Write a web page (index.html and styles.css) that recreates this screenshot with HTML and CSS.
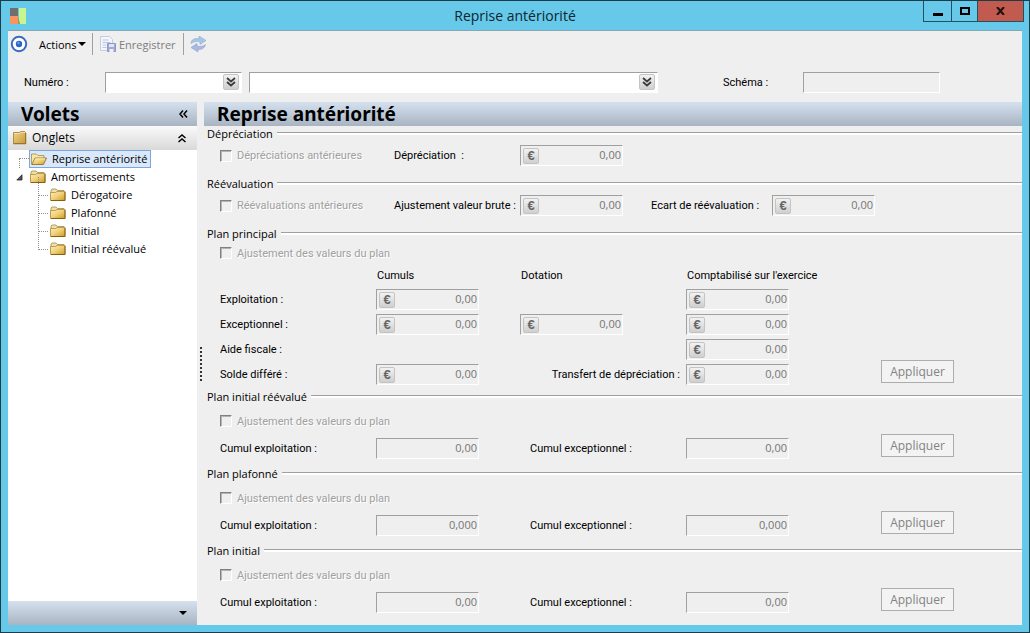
FILE: index.html
```html
<!DOCTYPE html>
<html lang="fr">
<head>
  <meta charset="UTF-8" />
  <title>Reprise antériorité</title>
  <link rel="stylesheet" href="styles.css">
</head>
<body>
  <!-- Shared icons -->
  <svg class="defs" width="0" height="0" aria-hidden="true">
    <linearGradient id="gold" x1="0" y1="0" x2="1" y2="1">
      <stop offset="0" stop-color="#fdf0b8" />
      <stop offset="0.5" stop-color="#f0cf78" />
      <stop offset="1" stop-color="#d09a1c" />
    </linearGradient>
    <linearGradient id="tan" x1="0" y1="0" x2="1" y2="1">
      <stop offset="0" stop-color="#efd289" />
      <stop offset="1" stop-color="#c99a3c" />
    </linearGradient>
    <symbol id="folder" viewBox="0 0 16 16">
      <path d="M1 13V3l1-1h4l1.500 1.500H14V6z" fill="#efe0a8" stroke="#a08a50" stroke-width=".8" />
      <path d="M.5 13.500V5.500h5L7 4.500h8v9z" fill="url(#gold)" stroke="#b08c38" stroke-width=".8" />
      <path d="M1 13.500h14V5" fill="none" stroke="#80611a" />
    </symbol>
    <symbol id="folder-open" viewBox="0 0 16 16">
      <path d="M.5 13V3h5l1.500 1.500h6V7" fill="#f6e6a8" stroke="#a98c40" stroke-width=".8" />
      <path d="M.8 13.500L4 7h11.500l-3 6.500z" fill="url(#gold)" stroke="#8c6a1c" stroke-width=".8" />
      <path d="M4.500 7.800h9.500" stroke="#fff6cf" stroke-width=".8" />
    </symbol>
    <symbol id="folder-group" viewBox="0 0 16 16">
      <path d="M1.500 13.500v-11h6l1-1h4l1 1v11z" fill="url(#tan)" stroke="#a07a30" stroke-width=".8" />
      <path d="M2 3.500h6l1-1h4" fill="none" stroke="#f8e4ac" stroke-width=".8" />
      <path d="M1.500 13.800h12.300V3" fill="none" stroke="#8a6420" stroke-width=".8" />
    </symbol>
    <symbol id="chevrons" viewBox="0 0 10 10">
      <path d="M1 1l4 3.500L9 1M1 5l4 3.500L9 5" fill="none" stroke="#3c3c3c" stroke-width="1.800" />
    </symbol>
  </svg>

  <div class="window">
    <header class="titlebar">
      <svg class="app-icon" width="16" height="16" viewBox="0 0 16 16">
        <path d="M0 0h8v8H0z" fill="#706f6f" />
        <path d="M0 8h8v8H0z" fill="#f9945f" />
        <path d="M9 0h7v16h-6l-1-3z" fill="#c9f58f" />
        <path d="M8 8l2 8H8z" fill="#8f9a70" />
      </svg>
      <h1>Reprise antériorité</h1>
      <div class="controls">
        <button class="minimize" aria-label="Réduire"><svg width="10" height="9" viewBox="0 0 10 9"><path d="M0 6h10v3H0z" /></svg></button>
        <button class="maximize" aria-label="Agrandir"><svg width="10" height="8" viewBox="0 0 10 8"><path d="M1 1h8v6H1z" fill="none" stroke="#000" stroke-width="2" /></svg></button>
        <button class="close" aria-label="Fermer"><svg width="9" height="8" viewBox="0 0 9 8"><path d="M1 0l7 8M8 0L1 8" stroke="#2a1010" stroke-width="2.200" /></svg></button>
      </div>
    </header>

    <div class="client">
      <div class="toolbar">
        <svg class="target" width="18" height="18" viewBox="0 0 18 18">
          <circle cx="9" cy="9" r="7.200" fill="#fff" stroke="#3a6bbd" stroke-width="2" />
          <circle cx="9" cy="9" r="3.200" fill="#2c66c4" />
          <circle cx="8.500" cy="8" r="1.200" fill="#6d9be4" />
        </svg>
        <button class="tool actions">Actions<span class="caret"></span></button>
        <button class="tool save" disabled>
          <svg width="16" height="16" viewBox="0 0 16 16">
            <path d="M.5.5h9l3 3v11H.5z" fill="#f3f6fb" stroke="#c3cce0" />
            <path d="M2.500 4h6M2.500 6.500h8M2.500 9h4M2.500 11.500h4" stroke="#b4c6e4" />
            <path d="M7.500 7.500h8v8h-8z" fill="#a3a9d2" stroke="#8f96c4" />
            <path d="M9 8h5v3H9z" fill="#dfe4f3" />
            <path d="M9.500 13h4v3h-4z" fill="#eceff8" />
          </svg>
          Enregistrer
        </button>
        <button class="tool refresh" disabled aria-label="Actualiser">
          <svg width="17" height="16" viewBox="0 0 17 16">
            <path d="M1 7.500C1 3.500 5 1.800 9 2.800V0l7 4.500-6 4V6C7 5 4 5.500 1 7.500z" fill="#a5c6e6" stroke="#8fabcd" stroke-width=".6" />
            <path d="M15.500 8.500c-1 4-4 5.500-7.500 4.700V16l-7-4.500 6-4V10c3 1 6 .5 8.500-1.500z" fill="#a9b9df" stroke="#8e9fc8" stroke-width=".6" />
          </svg>
        </button>
      </div>

      <div class="search">
        <label for="numero">Numéro :</label>
        <div class="lookup lookup-code">
          <input type="text" id="numero">
          <button aria-label="Choisir un numéro"><svg width="10" height="10"><use href="#chevrons" /></svg></button>
        </div>
        <div class="lookup lookup-name">
          <input type="text" aria-label="Libellé">
          <button aria-label="Choisir un libellé"><svg width="10" height="10"><use href="#chevrons" /></svg></button>
        </div>
        <label class="schema-label" for="schema">Schéma :</label>
        <input type="text" id="schema" class="schema" disabled>
      </div>

      <div class="panes">
        <nav class="sidebar">
          <div class="bar">
            <h2>Volets</h2>
            <button aria-label="Replier"><svg width="9" height="8" viewBox="0 0 9 8"><path d="M4 .5L1 4l3 3.500M8 .5L5 4l3 3.500" /></svg></button>
          </div>
          <div class="group">
            <svg width="16" height="16"><use href="#folder-group" /></svg>
            <span>Onglets</span>
            <button aria-label="Fermer le groupe"><svg width="8" height="9" viewBox="0 0 8 9"><path d="M.5 4L4 1l3.500 3M.5 8L4 5l3.500 3" /></svg></button>
          </div>
          <ul class="tree">
            <li class="first">
              <a href="#" class="selected"><svg width="16" height="16"><use href="#folder-open" /></svg>Reprise antériorité</a>
            </li>
            <li class="parent">
              <svg class="expander" width="7" height="7" viewBox="0 0 7 7"><path d="M6 .8V6H.8z" fill="#555" stroke="#222" stroke-width=".8" /></svg>
              <a href="#"><svg width="16" height="16"><use href="#folder" /></svg>Amortissements</a>
            </li>
            <li class="child"><a href="#"><svg width="16" height="16"><use href="#folder" /></svg>Dérogatoire</a></li>
            <li class="child"><a href="#"><svg width="16" height="16"><use href="#folder" /></svg>Plafonné</a></li>
            <li class="child"><a href="#"><svg width="16" height="16"><use href="#folder" /></svg>Initial</a></li>
            <li class="child"><a href="#"><svg width="16" height="16"><use href="#folder" /></svg>Initial réévalué</a></li>
          </ul>
          <div class="bar footer"><button aria-label="Configurer"><span class="caret"></span></button></div>
        </nav>

        <div class="splitter"><span></span></div>

        <main>
          <div class="bar"><h2>Reprise antériorité</h2></div>

          <fieldset class="simple">
            <legend>Dépréciation</legend>
            <div class="line">
              <label class="check"><input type="checkbox" disabled>Dépréciations antérieures</label>
              <label for="depreciation">Dépréciation&nbsp; :</label>
              <div class="amount"><button disabled>€</button><input type="text" id="depreciation" value="0,00" disabled></div>
            </div>
          </fieldset>

          <fieldset class="simple">
            <legend>Réévaluation</legend>
            <div class="line">
              <label class="check"><input type="checkbox" disabled>Réévaluations antérieures</label>
              <label for="valeur-brute">Ajustement valeur brute :</label>
              <div class="amount"><button disabled>€</button><input type="text" id="valeur-brute" value="0,00" disabled></div>
              <label for="ecart">Ecart de réévaluation :</label>
              <div class="amount"><button disabled>€</button><input type="text" id="ecart" value="0,00" disabled></div>
            </div>
          </fieldset>

          <fieldset class="principal">
            <legend>Plan principal</legend>
            <label class="check"><input type="checkbox" disabled>Ajustement des valeurs du plan</label>
            <div class="plan heads">
              <span class="c2">Cumuls</span>
              <span class="c3">Dotation</span>
              <span class="c4">Comptabilisé sur l'exercice</span>
            </div>
            <div class="plan">
              <label class="c1" for="exploitation">Exploitation :</label>
              <div class="amount c2"><button disabled>€</button><input type="text" id="exploitation" value="0,00" disabled></div>
              <div class="amount c4"><button disabled>€</button><input type="text" aria-label="Exploitation, exercice" value="0,00" disabled></div>

              <label class="c1" for="exceptionnel">Exceptionnel :</label>
              <div class="amount c2"><button disabled>€</button><input type="text" id="exceptionnel" value="0,00" disabled></div>
              <div class="amount c3"><button disabled>€</button><input type="text" aria-label="Exceptionnel, dotation" value="0,00" disabled></div>
              <div class="amount c4"><button disabled>€</button><input type="text" aria-label="Exceptionnel, exercice" value="0,00" disabled></div>

              <label class="c1" for="aide">Aide fiscale :</label>
              <div class="amount c4"><button disabled>€</button><input type="text" id="aide" value="0,00" disabled></div>

              <label class="c1" for="solde">Solde différé :</label>
              <div class="amount c2"><button disabled>€</button><input type="text" id="solde" value="0,00" disabled></div>
              <label class="c3 transfer" for="transfert">Transfert de dépréciation :</label>
              <div class="amount c4"><button disabled>€</button><input type="text" id="transfert" value="0,00" disabled></div>
              <button class="apply" disabled>Appliquer</button>
            </div>
          </fieldset>

          <fieldset>
            <legend>Plan initial réévalué</legend>
            <label class="check"><input type="checkbox" disabled>Ajustement des valeurs du plan</label>
            <div class="plan">
              <label class="c1" for="reevalue-expl">Cumul exploitation :</label>
              <div class="amount c2"><input type="text" id="reevalue-expl" value="0,00" disabled></div>
              <label class="c3 second" for="reevalue-exc">Cumul exceptionnel :</label>
              <div class="amount c4"><input type="text" id="reevalue-exc" value="0,00" disabled></div>
              <button class="apply" disabled>Appliquer</button>
            </div>
          </fieldset>

          <fieldset>
            <legend>Plan plafonné</legend>
            <label class="check"><input type="checkbox" disabled>Ajustement des valeurs du plan</label>
            <div class="plan">
              <label class="c1" for="plafonne-expl">Cumul exploitation :</label>
              <div class="amount c2"><input type="text" id="plafonne-expl" value="0,000" disabled></div>
              <label class="c3 second" for="plafonne-exc">Cumul exceptionnel :</label>
              <div class="amount c4"><input type="text" id="plafonne-exc" value="0,000" disabled></div>
              <button class="apply" disabled>Appliquer</button>
            </div>
          </fieldset>

          <fieldset>
            <legend>Plan initial</legend>
            <label class="check"><input type="checkbox" disabled>Ajustement des valeurs du plan</label>
            <div class="plan">
              <label class="c1" for="initial-expl">Cumul exploitation :</label>
              <div class="amount c2"><input type="text" id="initial-expl" value="0,00" disabled></div>
              <label class="c3 second" for="initial-exc">Cumul exceptionnel :</label>
              <div class="amount c4"><input type="text" id="initial-exc" value="0,00" disabled></div>
              <button class="apply" disabled>Appliquer</button>
            </div>
          </fieldset>
        </main>
      </div>
    </div>
  </div>
</body>
</html>
```
FILE: styles.css
```css
* {
  box-sizing: border-box;
}

body {
  margin: 0;
  font-family: Roboto, "Liberation Sans", Arial, sans-serif;
  font-size: 11px;
  line-height: 15px;
  color: #000;
}

button, input {
  font: inherit;
  color: inherit;
  margin: 0;
  padding: 0;
  border: none;
  border-radius: 0;
  background: none;
}

svg {
  display: block;
  flex: none;
}

.defs {
  position: absolute;
}

/* Window frame */
.window {
  display: flex;
  flex-direction: column;
  min-height: 100vh;
  padding: 0 7px 7px;
  border: 1px solid #1d3c4a;
  background: #66c9e9;
}

.titlebar {
  display: grid;
  grid-template-columns: 1fr auto 1fr;
  align-items: center;
  height: 29px;
}

.app-icon {
  margin-left: 2px;
}

.titlebar h1 {
  margin: 0;
  font: 14px/20px "Open Sans", sans-serif;
  color: #0c2530;
}

.controls {
  display: flex;
  justify-self: end;
  align-self: start;
  margin-right: -2px;
}

.controls button {
  display: flex;
  align-items: center;
  justify-content: center;
  width: 26px;
  height: 21px;
  border: 1px solid #25505f;
  border-width: 0 0 1px 1px;
}

.controls .minimize {
  width: 28px;
}

.controls .close {
  width: 47px;
  border-right-width: 1px;
  background: #c15b50;
}

.client {
  flex: 1;
  display: flex;
  flex-direction: column;
  border-top: 1px solid #86a6b3;
  background: #efefef;
}

/* Toolbar */
.toolbar {
  display: flex;
  align-items: center;
  height: 26px;
  padding-left: 2px;
  font-family: "Open Sans", sans-serif;
}

.tool {
  display: flex;
  align-items: center;
  height: 22px;
}

.tool:disabled {
  color: #7d7d7d;
}

.actions {
  width: 64px;
  padding-left: 11px;
}

.caret {
  display: block;
  border: 4px solid transparent;
  border-top-color: #000;
  border-bottom: none;
}

.actions .caret {
  margin-left: 1px;
}

.save {
  width: 91px;
  gap: 3px;
  padding-left: 7px;
  border-left: 1px solid #a0a0a0;
}

.refresh {
  padding-left: 6px;
  border-left: 1px solid #a0a0a0;
}

/* Search row */
.search {
  display: flex;
  align-items: center;
  height: 45px;
  padding: 5px 16px 0;
}

.search > label {
  width: 81px;
}

.search > .schema-label {
  width: 80px;
  margin-left: 65px;
}

.lookup, .schema, .amount {
  display: flex;
  align-items: center;
  height: 21px;
  border: 1px solid;
  border-color: #a0a0a0 #fff #fff #a0a0a0;
}

.lookup {
  padding-right: 2px;
  background: #fff;
}

.lookup-code {
  width: 137px;
  margin-right: 7px;
}

.lookup-name {
  width: 409px;
}

.schema {
  width: 137px;
}

.lookup input, .amount input {
  flex: 1;
  width: 0;
  min-width: 0;
}

.lookup button, .amount button {
  display: flex;
  align-items: center;
  justify-content: center;
  width: 16px;
  height: 16px;
  border: 1px solid #c4c4c4;
  border-radius: 2px;
  background: linear-gradient(#f2f2f2, #cfcfcf);
}

/* Panes */
.panes {
  flex: 1;
  display: flex;
}

.sidebar {
  display: flex;
  flex-direction: column;
  width: 189px;
  background: #fff;
  font: 11px/16px "Open Sans", sans-serif;
}

.bar {
  display: flex;
  align-items: center;
  justify-content: space-between;
  height: 24px;
  padding: 0 9px 0 13px;
  background: linear-gradient(#d5e1ee, #a8b4c2);
}

.bar h2 {
  margin: 0;
  font: bold 19px/24px "Noto Sans", sans-serif;
}

.bar path, .group button path {
  fill: none;
  stroke: #000;
  stroke-width: 1.500;
}

.group {
  display: flex;
  align-items: center;
  gap: 4px;
  height: 24px;
  padding: 0 11px 0 4px;
  background: linear-gradient(#fafafa, #d9d9d9);
  font-size: 12px;
}

.group button {
  margin-left: auto;
}

.tree {
  flex: 1;
  margin: 0;
  padding: 0;
  list-style: none;
}

.tree li {
  display: flex;
  align-items: center;
  height: 18px;
}

.tree a {
  display: flex;
  align-items: center;
  gap: 5px;
  height: 18px;
  padding: 0 3px 0 1px;
  border: 1px solid transparent;
  color: #000;
  text-decoration: none;
}

.tree .selected {
  border-color: #7da7dc;
  background: #d9e8fb;
}

/* Dotted branches */
.tree .first::before {
  content: "";
  width: 9px;
  height: 9px;
  margin-left: 11px;
  align-self: end;
  border: 1px dotted #909090;
  border-width: 1px 0 0 1px;
}

.tree .parent {
  padding-left: 8px;
  gap: 5px;
}

.tree .child::before {
  content: "";
  width: 9px;
  height: 18px;
  margin: -9px 0 0 30px;
  align-self: start;
  border: 1px dotted #909090;
  border-width: 0 0 1px 1px;
}

.footer {
  justify-content: flex-end;
  padding-right: 10px;
}

.splitter {
  display: flex;
  align-items: center;
  width: 7px;
  padding-left: 3px;
}

.splitter span {
  height: 34px;
  border-left: 2px dotted #333;
}

main {
  flex: 1;
}

/* Form sections */
fieldset {
  min-width: 0;
  margin: 0;
  padding: 8px 0 7px 16px;
  border: none;
}

legend {
  display: flex;
  align-items: center;
  gap: 4px;
  width: calc(100% + 16px);
  height: 15px;
  margin-left: -16px;
  padding: 0 0 0 3px;
  font-family: "Open Sans", sans-serif;
}

legend::after {
  content: "";
  flex: 1;
  height: 2px;
  border-top: 1px solid #a0a0a0;
  background: #fff;
}

.check {
  display: flex;
  align-items: center;
  gap: 5px;
  height: 18px;
  color: #a0a0a0;
  text-shadow: 1px 1px #fff;
}

.check input {
  appearance: none;
  width: 12px;
  height: 12px;
  border: 1px solid;
  border-color: #808080 #fff #fff #808080;
  box-shadow: inset 1px 1px #b4b4b4;
}

.simple {
  padding: 4px 0 10px 16px;
}

.line {
  display: grid;
  grid-template-columns: 174px 126px 131px 121px 1fr;
  align-items: center;
  height: 21px;
}

.plan {
  display: grid;
  grid-template-columns: 156px 144px 166px 195px 1fr;
  grid-auto-rows: 21px;
  row-gap: 4px;
  align-items: center;
  margin-top: 8px;
}

.c1 { grid-column: 1; }
.c2 { grid-column: 2; }
.c3 { grid-column: 3; }
.c4 { grid-column: 4; }

.principal {
  padding: 3px 0 4px 16px;
}

.principal .plan {
  margin-top: 3px;
}

.heads span {
  padding-left: 1px;
}

.transfer {
  padding-right: 6px;
  text-align: right;
}

.second {
  padding-left: 10px;
}

.amount {
  width: 103px;
  padding: 0 1px 0 2px;
  font-family: "Open Sans", sans-serif;
  color: #757575;
}

.amount input {
  padding-bottom: 2px;
  text-align: right;
}

.amount button {
  font: bold 13px/14px "Liberation Sans", sans-serif;
  color: #666;
}

.apply {
  grid-column: 5;
  align-self: end;
  width: 73px;
  height: 23px;
  margin-bottom: 2px;
  border: 1px solid #adadad;
  background: #f3f3f3;
  font: 12px/20px "Open Sans", sans-serif;
  color: #838383;
}
```
